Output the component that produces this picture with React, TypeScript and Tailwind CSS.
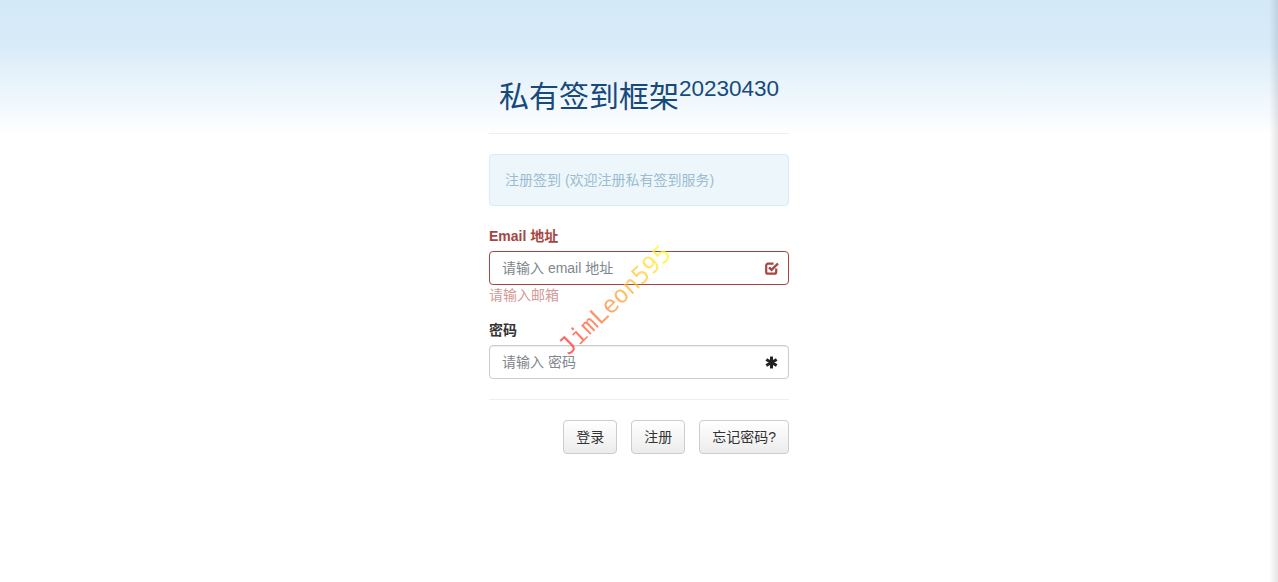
function CheckIcon() {
  return (
    <svg width="14" height="14" viewBox="0 0 14 14" className="text-[#a94442]">
      <path d="M11.2 7.5v3.4a1.8 1.8 0 0 1-1.8 1.8H3A1.8 1.8 0 0 1 1.2 10.9V4.5A1.8 1.8 0 0 1 3 2.7h5.5" fill="none" stroke="currentColor" strokeWidth="2.2" />
      <path d="M4 6.3l2.6 2.6L13 2.5" fill="none" stroke="currentColor" strokeWidth="2.4" />
    </svg>
  );
}

function AsteriskIcon() {
  return (
    <svg width="13" height="13" viewBox="0 0 12 12" className="text-[#222]">
      <g stroke="currentColor" strokeWidth="2.8">
        <path d="M6 0.5v11" />
        <path d="M1.2 3.2l9.6 5.6" />
        <path d="M1.2 8.8l9.6-5.6" />
      </g>
    </svg>
  );
}

export default function App() {
  const font = "font-['Liberation_Sans','Noto_Sans_CJK_SC',sans-serif]";

  return (
    <div className={`relative min-h-[582px] w-full overflow-hidden bg-[linear-gradient(to_bottom,#d3e8f8_0px,#d8ebf9_45px,#ffffff_135px)] text-[14px] leading-[20px] text-[#333] ${font}`}>
      <div className="relative mx-auto w-[300px] pt-[80px]">
        <h2 className="m-0 text-center text-[30px] font-normal leading-[33px] text-[#174a7b]">
          私有签到框架<span className="relative -top-[0.5em] text-[75%] leading-none">20230430</span>
        </h2>

        <hr className="my-5 border-0 border-t border-[#eeeeee]" />

        <div className="mb-5 rounded border border-[#d6ecf6] bg-[#ecf6fb] px-[15px] py-[15px] text-[#9dbcd0]">
          注册签到 (欢迎注册私有签到服务)
        </div>

        <div className="mb-[15px]">
          <label className="mb-[5px] block font-bold text-[#a94442]">Email 地址</label>
          <div className="flex h-[34px] items-center justify-between rounded border border-[#a94442] pl-3 pr-[9px]">
            <span className="text-[#80868d]">请输入 email 地址</span>
            <CheckIcon />
          </div>
          <p className="m-0 text-[#d49998]">请输入邮箱</p>
        </div>

        <div>
          <label className="mb-[5px] block font-bold text-[#333]">密码</label>
          <div className="flex h-[34px] items-center justify-between rounded border border-[#cccccc] pl-3 pr-[10px] shadow-[inset_0_1px_1px_rgba(0,0,0,0.075)]">
            <span className="text-[#80868d]">请输入 密码</span>
            <AsteriskIcon />
          </div>
        </div>

        <hr className="my-5 border-0 border-t border-[#eeeeee]" />

        <div className="flex justify-end gap-[14px]">
          {["登录", "注册", "忘记密码?"].map((t) => (
            <button
              key={t}
              className="h-[34px] rounded border border-[#cccccc] bg-[linear-gradient(to_bottom,#ffffff,#ececec)] px-3 text-[14px] text-[#333]"
            >
              {t}
            </button>
          ))}
        </div>

        <div className="pointer-events-none absolute left-[126px] top-[300px] -translate-x-1/2 -translate-y-1/2 -rotate-[44deg] whitespace-nowrap bg-[linear-gradient(to_right,#ff2a2a,#ff9a3a_50%,#ffff30)] bg-clip-text font-['DejaVu_Sans_Mono',monospace] text-[24px] leading-none text-transparent opacity-75">
          JimLeon595
        </div>
      </div>

      <div className="pointer-events-none absolute inset-y-0 right-0 w-[9px] bg-[linear-gradient(to_right,rgba(0,0,0,0),rgba(0,0,0,0.1))]" />
    </div>
  );
}
